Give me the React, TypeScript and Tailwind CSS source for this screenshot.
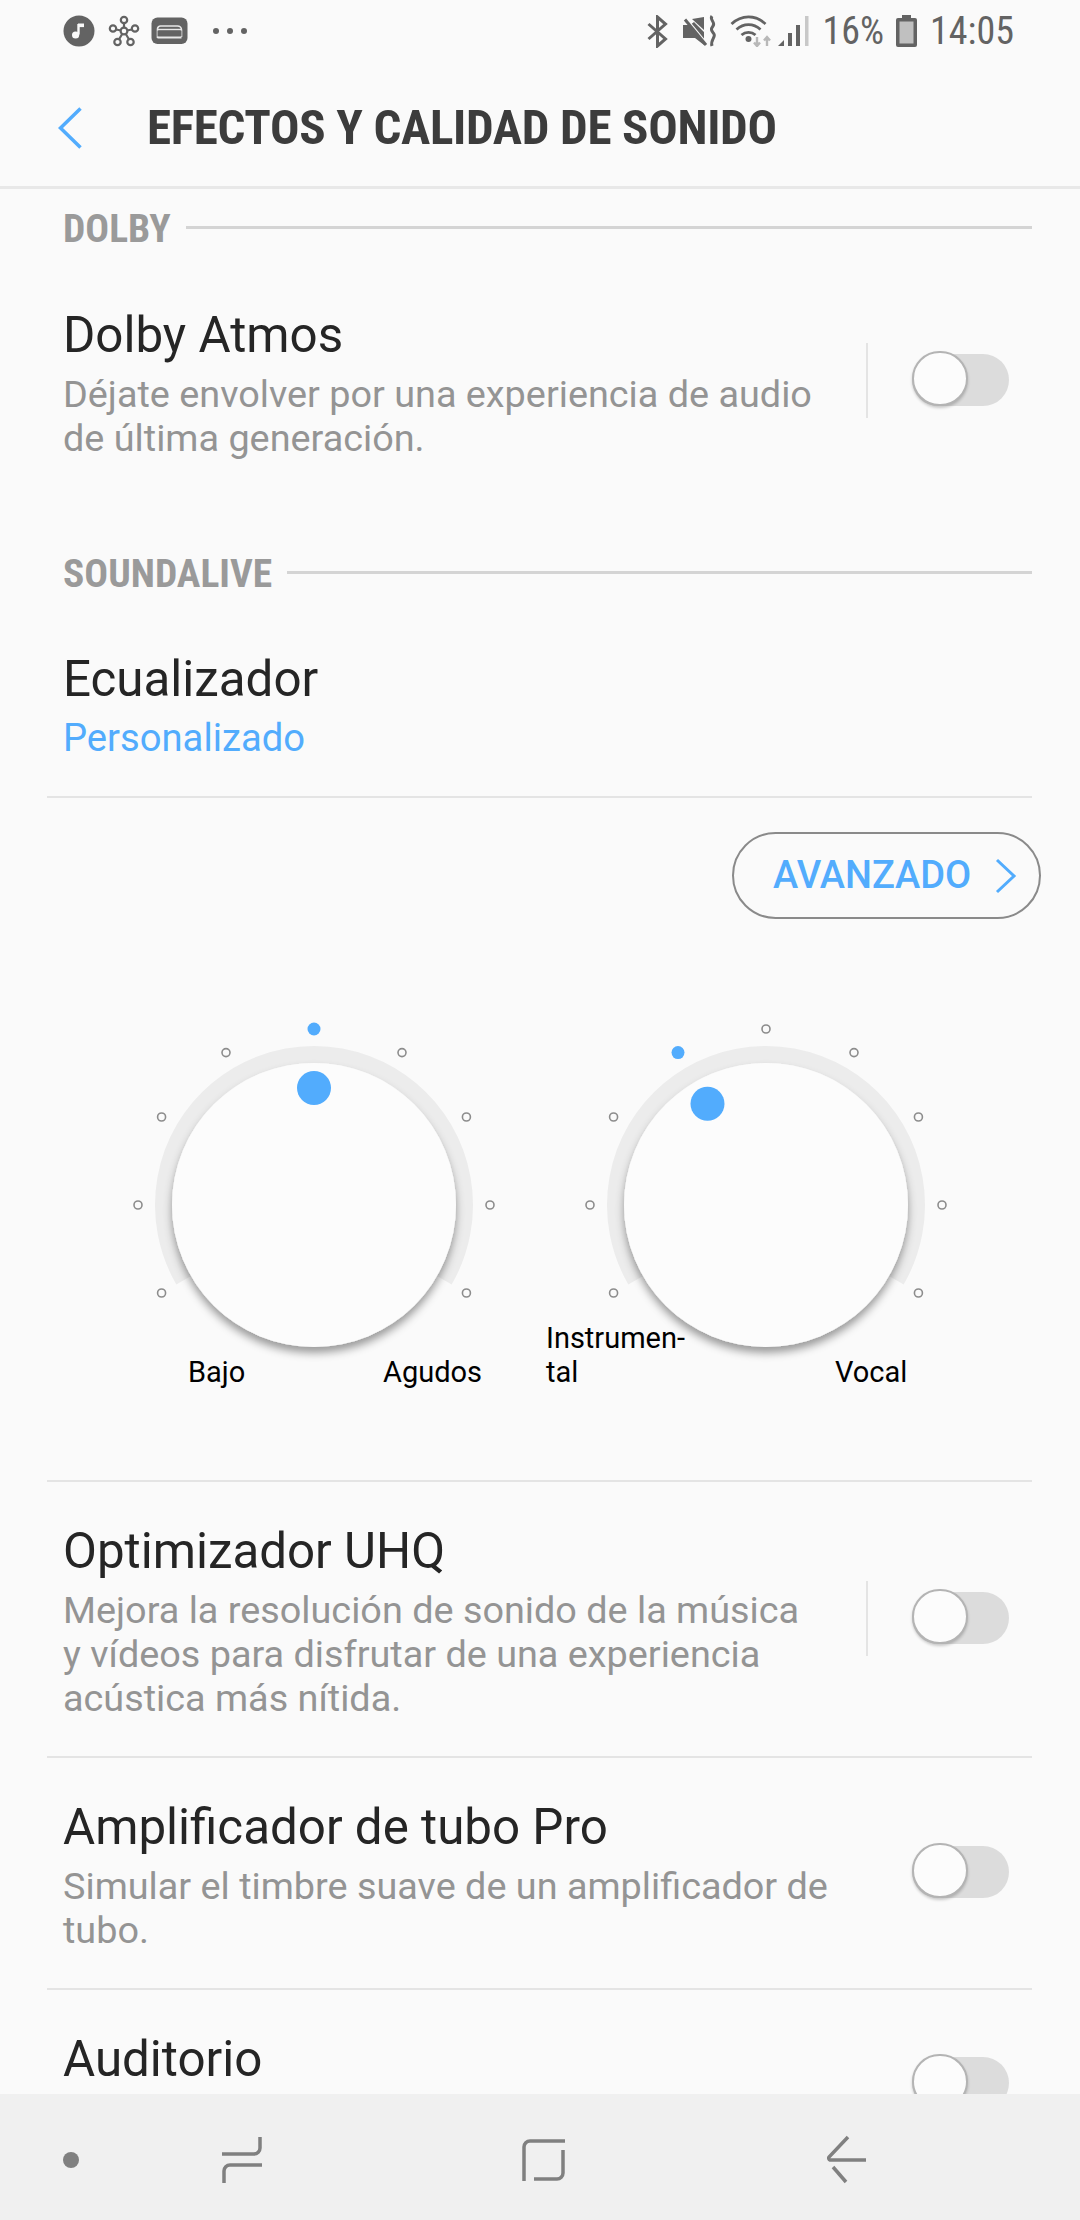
import React from 'react';

const font = { fontFamily: 'Roboto, sans-serif' };

const Toggle = () => (
  <div className="flex h-[52px] w-[97px] items-center rounded-full bg-[#dcdcdc]">
    <div className="-mt-[3px] h-[55px] w-[56px] rounded-full border-2 border-[#b4b4b4] bg-[#fcfcfc] shadow-[0_2px_3px_rgba(0,0,0,0.2)]" />
  </div>
);

const SectionHeader = ({ label }: { label: string }) => (
  <div className="flex h-[50px] items-center pl-[63px] pr-[48px]">
    <span className="pt-[3px] text-[39.5px] leading-[50px] font-bold text-[#9a9a9a] [font-stretch:75%]">{label}</span>
    <div className="ml-[15px] h-[3px] flex-1 bg-[#d4d4d4]" />
  </div>
);

const Divider = () => <div className="ml-[47px] mr-[48px] h-[2px] bg-[#e4e4e4]" />;

const SettingRow = ({ title, lines, split }: { title: string; lines: string[]; split?: boolean }) => (
  <div className="flex items-center justify-between pl-[63px] pr-[71px]">
    <div>
      <div className="text-[49.3px] leading-[60px] text-[#252525]">{title}</div>
      <div className="mt-[7px] text-[37.8px] leading-[44px] text-[#949494]">
        {lines.map((l) => (
          <div key={l}>{l}</div>
        ))}
      </div>
    </div>
    <div className="mb-[5px] flex items-center">
      {split && <div className="mr-[44px] h-[75px] w-[2px] bg-[#e4e4e4]" />}
      <Toggle />
    </div>
  </div>
);

const Dial = ({ active, labels }: { active: number; labels: React.ReactNode }) => {
  const cx = 200;
  const cy = 190;
  const angles = [-120, -90, -60, -30, 0, 30, 60, 90, 120];
  const rad = (active * Math.PI) / 180;
  const filterId = `dial-shadow-${active}`;
  return (
    <div className="relative h-[370px] w-[400px]">
      <svg width="400" height="370" viewBox="0 0 400 370" fill="none">
        <defs>
          <filter id={filterId} x="-20%" y="-20%" width="140%" height="140%">
            <feDropShadow dx="0" dy="6" stdDeviation="4" floodColor="#000" floodOpacity="0.38" />
          </filter>
        </defs>
        <path d="M69.7 265.25A150.5 150.5 0 1 1 330.3 265.25" stroke="#ececec" strokeWidth="17" />
        <circle cx={cx} cy={cy} r="142" fill="#fcfcfc" filter={`url(#${filterId})`} />
        {angles.map((a) => {
          const t = (a * Math.PI) / 180;
          const x = cx + 176 * Math.sin(t);
          const y = cy - 176 * Math.cos(t);
          return a === active ? (
            <circle key={a} cx={x} cy={y} r="6.5" fill="#52acfd" />
          ) : (
            <circle key={a} cx={x} cy={y} r="4" stroke="#8c8c8c" strokeWidth="1.6" />
          );
        })}
        <circle cx={cx + 117 * Math.sin(rad)} cy={cy - 117 * Math.cos(rad)} r="17" fill="#52acfd" />
      </svg>
      {labels}
    </div>
  );
};

const StatusBar = () => (
  <div className="flex h-[62px] items-center justify-between pl-[63px] pr-[66px] text-[#636363]">
    <div className="flex items-center">
      <svg width="32" height="32" viewBox="0 0 32 32">
        <circle cx="16" cy="16" r="15.5" fill="#636363" />
        <path d="M15.5 9v10.5" stroke="#fafafa" strokeWidth="2.4" />
        <path d="M15 8.5h6v3.6h-6z" fill="#fafafa" />
        <circle cx="12.6" cy="20" r="3.6" fill="#fafafa" />
      </svg>
      <svg className="ml-[13px]" width="32" height="32" viewBox="0 0 32 32" fill="none" stroke="#636363" strokeWidth="2.2">
        <path d="M16 5v11M5 14l11 2 11-2M16 16l-6 10M16 16l6 10" />
        <circle cx="16" cy="16" r="3.4" fill="#fafafa" />
        <circle cx="16" cy="5" r="3.2" fill="#fafafa" />
        <circle cx="5" cy="13.5" r="3.2" fill="#fafafa" />
        <circle cx="27" cy="13.5" r="3.2" fill="#fafafa" />
        <circle cx="9.5" cy="27" r="3.2" fill="#fafafa" />
        <circle cx="22.5" cy="27" r="3.2" fill="#fafafa" />
      </svg>
      <svg className="ml-[11px]" width="37" height="28" viewBox="0 0 37 28" fill="none">
        <rect x="0.5" y="0.5" width="36" height="26.5" rx="6" fill="#636363" />
        <path d="M6.500 21v-9a3 3 0 0 1 3-3h17a4 4 0 0 1 4 4v7" stroke="#e8e8e8" strokeWidth="1.6" />
        <path d="M6.500 13.500h24v6h-24z" fill="#636363" />
        <path d="M6.500 20.500h24" stroke="#e8e8e8" strokeWidth="2" />
        <path d="M6 12.500h25" stroke="#e8e8e8" strokeWidth="1.4" />
      </svg>
      <div className="ml-[25px] flex gap-[8px]">
        <div className="h-[6px] w-[6px] rounded-full bg-[#636363]" />
        <div className="h-[6px] w-[6px] rounded-full bg-[#636363]" />
        <div className="h-[6px] w-[6px] rounded-full bg-[#636363]" />
      </div>
    </div>
    <div className="flex items-center">
      <svg width="21" height="33" viewBox="0 0 21 33" fill="none" stroke="#636363" strokeWidth="3">
        <path d="M1.5 9l17 15-8 7V2l8 7-17 15" />
      </svg>
      <svg className="ml-[14px]" width="35" height="32" viewBox="0 0 35 32" fill="none">
        <path d="M1 10h7l4-3 10 10v13l-9-7H1z" fill="#636363" />
        <path d="M10 4l12-2v13z" fill="#636363" />
        <path d="M3 2l22 27" stroke="#fafafa" strokeWidth="2" />
        <path d="M3 4.500l21 25.500" stroke="#636363" strokeWidth="3" />
        <path d="M30 1c-3 4 4 6 1 10s-1 5 1 8-4 6-2 12" stroke="#636363" strokeWidth="3" />
      </svg>
      <svg className="ml-[13px]" width="43" height="32" viewBox="0 0 43 32" fill="none">
        <path d="M1.5 9c10-9.500 24-9.500 34 0M6.500 14.500c7-6.500 17-6.500 24 0M11.500 20c4-3.600 10-3.600 14 0" stroke="#636363" strokeWidth="2.8" />
        <circle cx="18.500" cy="24" r="3" fill="#636363" />
        <path d="M27 22v9M24 27.500l3 3.500 3-3.500" stroke="#b8b8b8" strokeWidth="2.400" />
        <path d="M37 31v-9M34 25.500l3-3.500 3 3.500" stroke="#b8b8b8" strokeWidth="2.400" />
      </svg>
      <svg className="ml-[5px]" width="31" height="32" viewBox="0 0 31 32">
        <path d="M0 31l6-6v6z" fill="#636363" />
        <rect x="10" y="18" width="4" height="13" fill="#636363" />
        <rect x="18" y="10" width="4" height="21" fill="#636363" />
        <rect x="27" y="1" width="3.500" height="30" fill="#c8c8c8" />
      </svg>
      <span className="ml-[14px] text-[38px] leading-[44px] [font-stretch:75%]">16%</span>
      <svg className="ml-[12px]" width="21" height="32" viewBox="0 0 21 32">
        <path d="M6 0h9v3h4a2 2 0 0 1 2 2v25a2 2 0 0 1-2 2H2a2 2 0 0 1-2-2V5a2 2 0 0 1 2-2h4z" fill="#636363" />
        <rect x="3.500" y="6.500" width="14" height="22" fill="#c0c0c0" />
      </svg>
      <span className="ml-[13px] text-[38px] leading-[44px] [font-stretch:75%]">14:05</span>
    </div>
  </div>
);

const NavBar = () => (
  <div className="flex h-[126px] items-center bg-[#f0f0f0]">
    <svg width="1080" height="126" viewBox="0 2094 1080 126" fill="none" stroke="#808080" strokeWidth="3.500">
      <circle cx="71" cy="2160" r="8" fill="#808080" stroke="none" />
      <path d="M222 2154h32a6 6 0 0 0 6-6v-11" />
      <path d="M262 2165h-32a6 6 0 0 0-6 6v12" />
      <path d="M565 2141h-35a6 6 0 0 0-6 6v34" />
      <path d="M534 2179h23a6 6 0 0 0 6-6v-23" />
      <path d="M848 2137l-19 20a2 2 0 0 0 1 3h36" />
      <path d="M833 2167l13 15" />
    </svg>
  </div>
);

export default function App() {
  return (
    <div className="flex h-[2220px] w-[1080px] flex-col overflow-hidden bg-[#fafafa]" style={font}>
      <StatusBar />
      <div className="flex h-[127px] shrink-0 items-center border-b-[3px] border-[#e8e8e8] pl-[58px] pt-[7px]">
        <svg width="24" height="42" viewBox="0 0 24 42" fill="none" stroke="#52acfd" strokeWidth="3.500">
          <path d="M22.500 1.500L2.500 21l20 19.500" />
        </svg>
        <h1 className="ml-[65px] text-[49px] font-bold tracking-[-0.33px] text-[#3c3c3c] [font-stretch:75%]">EFECTOS Y CALIDAD DE SONIDO</h1>
      </div>

      <div className="min-h-0 flex-1 overflow-hidden pt-[13px]">
        <SectionHeader label="DOLBY" />
        <div className="pt-[53px]">
          <SettingRow
            title="Dolby Atmos"
            lines={['Déjate envolver por una experiencia de audio', 'de última generación.']}
            split
          />
        </div>
        <div className="pt-[87px]">
          <SectionHeader label="SOUNDALIVE" />
        </div>
        <div className="pb-[36px] pl-[63px] pt-[52px]">
          <div className="text-[49.3px] leading-[60px] text-[#252525]">Ecualizador</div>
          <div className="mt-[7px] text-[38.2px] leading-[44px] text-[#52acfd]">Personalizado</div>
        </div>
        <Divider />

        <div className="flex justify-end pr-[39px] pt-[34px]">
          <div className="flex h-[87px] w-[309px] items-center rounded-full border-2 border-[#8a8a8a] pl-[39px]">
            <span className="text-[38px] font-medium text-[#52acfd]">AVANZADO</span>
            <svg className="ml-[24px]" width="22" height="36" viewBox="0 0 22 36" fill="none" stroke="#52acfd" strokeWidth="3">
              <path d="M2 2l17 16L2 34" />
            </svg>
          </div>
        </div>

        <div className="flex gap-[52px] pb-[95px] pl-[114px] pt-[96px]">
          <Dial
            active={0}
            labels={
              <>
                <span className="absolute left-[74px] top-[340px] text-[29px] leading-[34px] text-black">Bajo</span>
                <span className="absolute left-[269px] top-[340px] text-[29px] leading-[34px] text-black">Agudos</span>
              </>
            }
          />
          <Dial
            active={-30}
            labels={
              <>
                <span className="absolute -left-[20px] top-[306px] text-[29px] leading-[34px] text-black">
                  Instrumen-
                  <br />
                  tal
                </span>
                <span className="absolute left-[269px] top-[340px] text-[29px] leading-[34px] text-black">Vocal</span>
              </>
            }
          />
        </div>
        <Divider />

        <div className="pb-[36px] pt-[39px]">
          <SettingRow
            title="Optimizador UHQ"
            lines={[
              'Mejora la resolución de sonido de la música',
              'y vídeos para disfrutar de una experiencia',
              'acústica más nítida.',
            ]}
            split
          />
        </div>
        <Divider />
        <div className="pb-[36px] pt-[39px]">
          <SettingRow title="Amplificador de tubo Pro" lines={['Simular el timbre suave de un amplificador de', 'tubo.']} />
        </div>
        <Divider />
        <div className="flex items-start justify-between pl-[63px] pr-[71px] pt-[39px]">
          <div className="text-[49.3px] leading-[60px] text-[#252525]">Auditorio</div>
          <div className="mt-[28px]">
            <Toggle />
          </div>
        </div>
      </div>

      <NavBar />
    </div>
  );
}
